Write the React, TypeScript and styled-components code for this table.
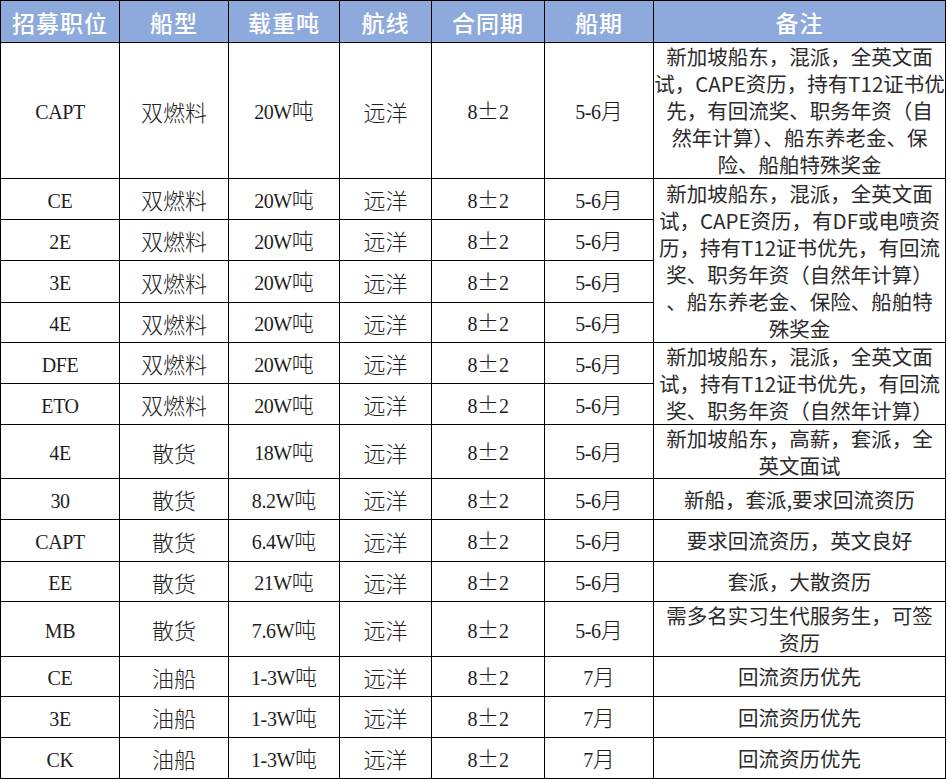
import styled, { createGlobalStyle } from 'styled-components';

const GlobalStyle = createGlobalStyle`
  body {
    margin: 0;
    background: #ffffff;
    font-family: "Noto Sans CJK SC", "Noto Sans", sans-serif;
  }
`;

const Sheet = styled.div<{ rows: string }>`
  display: grid;
  grid-template-columns: 119px 109px 111px 92px 113px 109px 292px;
  grid-template-rows: ${(p) => p.rows};
  width: max-content;
  border-top: 1px solid #000;
  border-left: 1px solid #000;
`;

const HeadCell = styled.div`
  box-sizing: border-box;
  display: flex;
  align-items: center;
  justify-content: center;
  background: #8eaadc;
  color: #ffffff;
  font-family: "Noto Sans CJK SC", sans-serif;
  font-size: 23px;
  font-weight: 500;
  letter-spacing: 1px;
  border-right: 1px solid #000;
  border-bottom: 1px solid #000;
`;

const Cell = styled.div`
  box-sizing: border-box;
  display: flex;
  align-items: center;
  justify-content: center;
  color: #1e1e1e;
  font-family: "Noto Sans CJK SC", sans-serif;
  font-size: 22px;
  font-weight: 300;
  line-height: 30px;
  white-space: nowrap;
  border-right: 1px solid #000;
  border-bottom: 1px solid #000;
`;

const CellText = styled.span`
  display: block;
`;

const Latin = styled.span`
  font-family: "Liberation Serif", "DejaVu Serif", serif;
  font-size: 20px;
  font-weight: 400;
  letter-spacing: -0.4px;
`;

const NoteCell = styled.div<{ span: number }>`
  box-sizing: border-box;
  grid-row: span ${(p) => p.span};
  display: flex;
  flex-direction: column;
  align-items: center;
  justify-content: center;
  color: #2b2b2b;
  font-family: "Noto Sans CJK SC", sans-serif;
  font-size: 20.5px;
  line-height: 27px;
  white-space: nowrap;
  border-right: 1px solid #000;
  border-bottom: 1px solid #000;
`;

const NoteLine = styled.span`
  display: block;
  height: 27px;
  text-align: center;
`;

type Note = { span: number; lines: string[] };

type Row = {
  pos: string;
  ship: string;
  dwt: string;
  route: string;
  contract: string;
  period: string;
  height: number;
  note?: Note;
};

const headers = ['招募职位', '船型', '载重吨', '航线', '合同期', '船期', '备注'];

const rows: Row[] = [
  {
    pos: 'CAPT', ship: '双燃料', dwt: '20W吨', route: '远洋', contract: '8±2', period: '5-6月', height: 136,
    note: {
      span: 1,
      lines: [
        '新加坡船东，混派，全英文面',
        '试，CAPE资历，持有T12证书优',
        '先，有回流奖、职务年资（自',
        '然年计算）、船东养老金、保',
        '险、船舶特殊奖金',
      ],
    },
  },
  {
    pos: 'CE', ship: '双燃料', dwt: '20W吨', route: '远洋', contract: '8±2', period: '5-6月', height: 41,
    note: {
      span: 4,
      lines: [
        '新加坡船东，混派，全英文面',
        '试，CAPE资历，有DF或电喷资',
        '历，持有T12证书优先，有回流',
        '奖、职务年资（自然年计算）',
        '、船东养老金、保险、船舶特',
        '殊奖金',
      ],
    },
  },
  { pos: '2E', ship: '双燃料', dwt: '20W吨', route: '远洋', contract: '8±2', period: '5-6月', height: 41 },
  { pos: '3E', ship: '双燃料', dwt: '20W吨', route: '远洋', contract: '8±2', period: '5-6月', height: 42 },
  { pos: '4E', ship: '双燃料', dwt: '20W吨', route: '远洋', contract: '8±2', period: '5-6月', height: 40 },
  {
    pos: 'DFE', ship: '双燃料', dwt: '20W吨', route: '远洋', contract: '8±2', period: '5-6月', height: 41,
    note: {
      span: 2,
      lines: [
        '新加坡船东，混派，全英文面',
        '试，持有T12证书优先，有回流',
        '奖、职务年资（自然年计算）',
      ],
    },
  },
  { pos: 'ETO', ship: '双燃料', dwt: '20W吨', route: '远洋', contract: '8±2', period: '5-6月', height: 41 },
  {
    pos: '4E', ship: '散货', dwt: '18W吨', route: '远洋', contract: '8±2', period: '5-6月', height: 54,
    note: { span: 1, lines: ['新加坡船东，高薪，套派，全', '英文面试'] },
  },
  {
    pos: '30', ship: '散货', dwt: '8.2W吨', route: '远洋', contract: '8±2', period: '5-6月', height: 41,
    note: { span: 1, lines: ['新船，套派,要求回流资历'] },
  },
  {
    pos: 'CAPT', ship: '散货', dwt: '6.4W吨', route: '远洋', contract: '8±2', period: '5-6月', height: 42,
    note: { span: 1, lines: ['要求回流资历，英文良好'] },
  },
  {
    pos: 'EE', ship: '散货', dwt: '21W吨', route: '远洋', contract: '8±2', period: '5-6月', height: 40,
    note: { span: 1, lines: ['套派，大散资历'] },
  },
  {
    pos: 'MB', ship: '散货', dwt: '7.6W吨', route: '远洋', contract: '8±2', period: '5-6月', height: 55,
    note: { span: 1, lines: ['需多名实习生代服务生，可签', '资历'] },
  },
  {
    pos: 'CE', ship: '油船', dwt: '1-3W吨', route: '远洋', contract: '8±2', period: '7月', height: 40,
    note: { span: 1, lines: ['回流资历优先'] },
  },
  {
    pos: '3E', ship: '油船', dwt: '1-3W吨', route: '远洋', contract: '8±2', period: '7月', height: 41,
    note: { span: 1, lines: ['回流资历优先'] },
  },
  {
    pos: 'CK', ship: '油船', dwt: '1-3W吨', route: '远洋', contract: '8±2', period: '7月', height: 41,
    note: { span: 1, lines: ['回流资历优先'] },
  },
];

// latin runs get a narrow serif face, like the half-width glyphs of the sheet
const mixed = (text: string) =>
  text
    .split(/([A-Za-z0-9.\-]+)/)
    .filter(Boolean)
    .map((part, i) => (/^[A-Za-z0-9.\-]+$/.test(part) ? <Latin key={i}>{part}</Latin> : part));

const RecruitTable = () => {
  const template = ['42px', ...rows.map((r) => `${r.height}px`)].join(' ');

  return (
    <Sheet rows={template}>
      {headers.map((h) => (
        <HeadCell key={h}>{h}</HeadCell>
      ))}
      {rows.map((r, i) => [
        <Cell key={`${i}-pos`}><CellText>{mixed(r.pos)}</CellText></Cell>,
        <Cell key={`${i}-ship`}><CellText>{r.ship}</CellText></Cell>,
        <Cell key={`${i}-dwt`}><CellText>{mixed(r.dwt)}</CellText></Cell>,
        <Cell key={`${i}-route`}><CellText>{r.route}</CellText></Cell>,
        <Cell key={`${i}-contract`}><CellText>{mixed(r.contract)}</CellText></Cell>,
        <Cell key={`${i}-period`}><CellText>{mixed(r.period)}</CellText></Cell>,
        r.note ? (
          <NoteCell key={`${i}-note`} span={r.note.span}>
            {r.note.lines.map((line, j) => (
              <NoteLine key={j}>{line}</NoteLine>
            ))}
          </NoteCell>
        ) : null,
      ])}
    </Sheet>
  );
};

export default function App() {
  return (
    <>
      <GlobalStyle />
      <RecruitTable />
    </>
  );
}
